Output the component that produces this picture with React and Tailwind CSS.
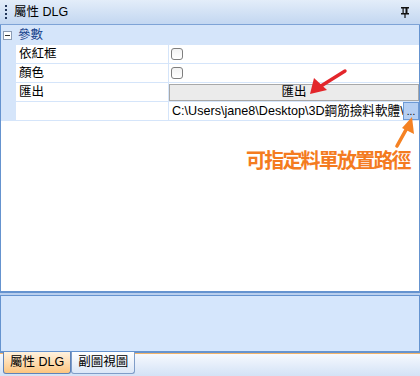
const FONT = { fontFamily: '"Liberation Sans", "Noto Sans CJK TC", sans-serif' };

function PinIcon() {
  return (
    <svg width="10" height="12" viewBox="0 0 10 12" className="block">
      <rect x="1" y="1" width="8" height="1.5" fill="#111" />
      <rect x="2.5" y="2" width="1.2" height="5" fill="#111" />
      <rect x="5.5" y="2" width="2" height="5" fill="#111" />
      <rect x="1" y="7" width="8" height="1.5" fill="#111" />
      <rect x="4.4" y="8" width="1.2" height="4" fill="#111" />
    </svg>
  );
}

function Checkbox() {
  return <div className="h-[12px] w-[12px] rounded-[3px] border border-[#7e7e7e] bg-gradient-to-b from-[#f2f2f2] to-white" />;
}

function Row({ name, children }) {
  return (
    <div className="flex h-[19px] border-b border-[#d5e5fa]">
      <div className="w-[15px] shrink-0 bg-[#d5e5fa]" />
      <div className="flex w-[153px] shrink-0 items-center border-r border-[#d5e5fa] pl-[3px] text-[12.5px] text-black">{name}</div>
      <div className="flex min-w-0 flex-1 items-center">{children}</div>
    </div>
  );
}

function Arrows() {
  return (
    <svg className="pointer-events-none absolute left-0 top-0" width="420" height="376">
      <line x1="345" y1="71" x2="321" y2="86" stroke="#e3262b" strokeWidth="3.4" strokeLinecap="round" />
      <polygon points="310,94 314,78 327,90" fill="#e3262b" />
      <line x1="397" y1="146" x2="407" y2="128" stroke="#f58223" strokeWidth="3.6" strokeLinecap="round" />
      <polygon points="412,117 402,128 414,134" fill="#f58223" />
    </svg>
  );
}

export default function App() {
  return (
    <div className="relative flex h-[376px] w-[420px] flex-col overflow-hidden bg-white" style={FONT}>
      {/* title bar */}
      <div className="flex h-[25px] shrink-0 items-center border-b border-[#7ea3d6] bg-gradient-to-b from-[#e3edf9] to-[#c3d7f1]">
        <div className="ml-[5px] flex flex-col gap-[2px]">
          <span className="h-[2px] w-[2px] bg-[#23375a]" />
          <span className="h-[2px] w-[2px] bg-[#23375a]" />
          <span className="h-[2px] w-[2px] bg-[#23375a]" />
          <span className="h-[2px] w-[2px] bg-[#23375a]" />
        </div>
        <span className="ml-[7px] text-[12.5px] text-black">屬性 DLG</span>
        <div className="ml-auto mr-[10px]">
          <PinIcon />
        </div>
      </div>

      {/* property grid */}
      <div className="flex h-[266px] shrink-0 flex-col border-x border-[#6593cf] bg-white">
        <div className="flex h-[20px] items-center bg-[#d5e5fa]">
          <div className="ml-[2px] flex h-[9px] w-[9px] items-center justify-center border border-[#8c9cb4] bg-white">
            <span className="h-[1px] w-[5px] bg-[#333]" />
          </div>
          <span className="ml-[6px] text-[12.5px] text-[#15428b]">參數</span>
        </div>
        <Row name="依紅框">
          <div className="ml-[2px]"><Checkbox /></div>
        </Row>
        <Row name="顏色">
          <div className="ml-[2px]"><Checkbox /></div>
        </Row>
        <Row name="匯出">
          <div className="flex h-[17px] flex-1 items-center justify-center border border-[#a8a8a8] bg-[#ebebeb] text-[12.5px] text-black">匯出</div>
        </Row>
        <Row name="">
          <div className="min-w-0 flex-1 overflow-hidden whitespace-nowrap pl-[3px] text-[12.6px] text-black">C:\Users\jane8\Desktop\3D鋼筋撿料軟體\料單</div>
          <div className="flex h-[18px] w-[16px] shrink-0 items-end justify-center border border-[#6d9ad6] bg-[#b6cff2] pb-[2px] text-[10px] leading-none text-black">...</div>
        </Row>
      </div>

      {/* splitter */}
      <div className="h-[5px] shrink-0 border-t-2 border-b border-[#6593cf] bg-[#b9cfee]" />

      {/* description */}
      <div className="h-[57px] shrink-0 border-x border-b-2 border-[#6593cf] bg-[#d5e6fc]" />

      {/* tab strip */}
      <div className="flex flex-1 items-start border-t border-[#f2b46a] bg-gradient-to-b from-[#f6f9fe] to-[#d3e2f6] pl-[3px]">
        <div className="-mt-[2px] flex h-[22px] items-center rounded-b-[3px] border border-t-0 border-[#5f83b8] bg-gradient-to-b from-[#fff2df] to-[#fcc57e] px-[6px] text-[12.5px] text-black">屬性 DLG</div>
        <div className="-mt-[2px] flex h-[22px] items-center rounded-b-[3px] border border-t-0 border-[#7f9dc8] bg-gradient-to-b from-white to-[#dbe7f7] px-[6px] text-[12.5px] text-black">副圖視圖</div>
      </div>

      <Arrows />
      <div className="absolute left-[246px] top-[150px] whitespace-nowrap text-[20px] font-bold leading-none tracking-[-1.8px] text-[#f47b20]" style={{ fontFamily: '"Noto Sans CJK TC", sans-serif' }}>
        可指定料單放置路徑
      </div>
    </div>
  );
}
